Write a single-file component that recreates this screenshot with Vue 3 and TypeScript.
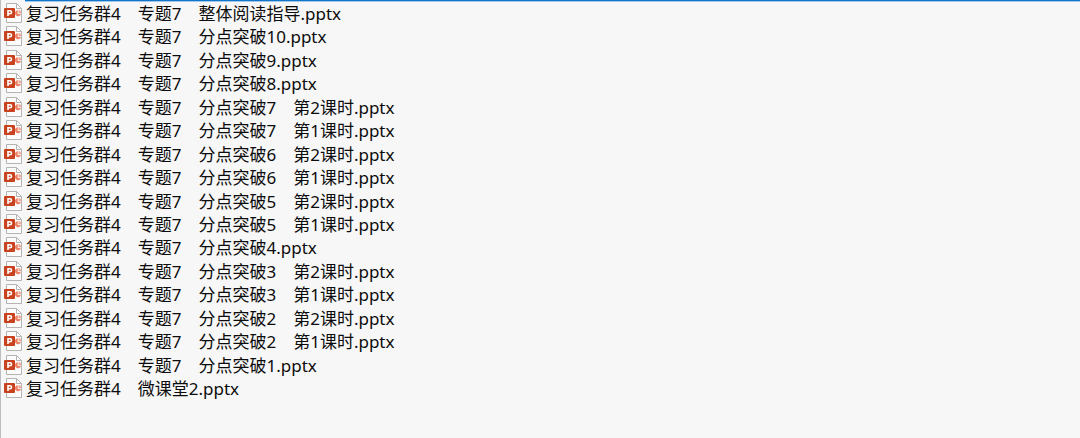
<script setup lang="ts">
const files: string[] = [
  '复习任务群4　专题7　整体阅读指导.pptx',
  '复习任务群4　专题7　分点突破10.pptx',
  '复习任务群4　专题7　分点突破9.pptx',
  '复习任务群4　专题7　分点突破8.pptx',
  '复习任务群4　专题7　分点突破7　第2课时.pptx',
  '复习任务群4　专题7　分点突破7　第1课时.pptx',
  '复习任务群4　专题7　分点突破6　第2课时.pptx',
  '复习任务群4　专题7　分点突破6　第1课时.pptx',
  '复习任务群4　专题7　分点突破5　第2课时.pptx',
  '复习任务群4　专题7　分点突破5　第1课时.pptx',
  '复习任务群4　专题7　分点突破4.pptx',
  '复习任务群4　专题7　分点突破3　第2课时.pptx',
  '复习任务群4　专题7　分点突破3　第1课时.pptx',
  '复习任务群4　专题7　分点突破2　第2课时.pptx',
  '复习任务群4　专题7　分点突破2　第1课时.pptx',
  '复习任务群4　专题7　分点突破1.pptx',
  '复习任务群4　微课堂2.pptx',
]
</script>

<template>
  <main class="pane">
    <div class="edge"></div>
    <ul class="files">
      <li v-for="name in files" :key="name" class="file">
        <svg class="icon" viewBox="0 0 19 23" aria-hidden="true">
          <path d="M2.5 1.5h10l5 5v14h-15z" fill="#fcfcfc" stroke="#b4b4b4" />
          <path d="M12.5 1.5v5h5" fill="none" stroke="#b4b4b4" />
          <path d="M13.8 8.2a3 3 0 1 0 3.1 3.8h-3.1z" fill="#ee8468" />
          <path d="M14.5 8a3 3 0 0 1 2.7 3.2h-2.7z" fill="#f6a68f" />
          <rect x="0" y="6" width="11" height="10" rx="1" fill="#c9421f" />
          <path d="M4 14V8.7h2a1.5 1.5 0 0 1 0 3.1H4" fill="none" stroke="#fff" stroke-width="1.6" />
        </svg>
        <span class="name">{{ name }}</span>
      </li>
    </ul>
  </main>
</template>

<style>
body {
  margin: 0;
  background: #f7f7f7;
}
</style>

<style scoped>
.pane {
  box-sizing: border-box;
  min-height: 100vh;
  border-left: 1px solid #bdbdc1;
  background: #f7f7f7;
}
.edge {
  height: 1px;
  margin-left: 24px;
  border-bottom: 1px solid #9cc9ee;
  background: #1474c8;
}
.files {
  display: flex;
  flex-direction: column;
  justify-content: space-between;
  min-height: 398px;
  margin: 0;
  padding: 0 0 0 3px;
  list-style: none;
}
.file {
  display: flex;
  align-items: center;
  gap: 3px;
}
.icon {
  width: 19px;
  height: 23px;
  flex: none;
}
.name {
  color: #0c0c0c;
  font: 17px/23px "Noto Sans", "Noto Sans CJK SC", sans-serif;
  white-space: nowrap;
}
</style>
